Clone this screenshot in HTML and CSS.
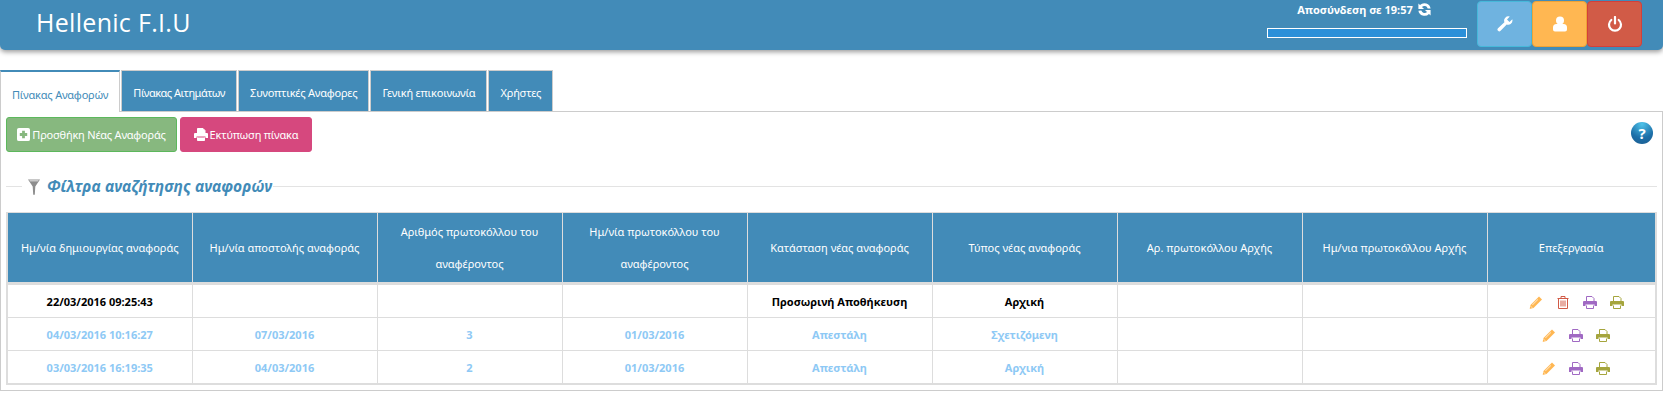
FILE: index.html
```html
<!DOCTYPE html>
<html lang="el">
<head>
  <meta charset="UTF-8" />
  <title>Hellenic F.I.U</title>
  <link rel="stylesheet" href="styles.css">
</head>
<body>

<svg class="defs" width="0" height="0">
  <symbol id="i-print" viewBox="0 0 14 13">
    <path d="M3.500 5.500V.5h5.500l2 2v3M3.500 9.500v3h7v-3" fill="#fff" stroke="currentColor"/>
    <path d="M1 5h12a1 1 0 0 1 1 1v4h-2.500V8.500h-9V10H0V6a1 1 0 0 1 1-1z" fill="currentColor"/>
  </symbol>
  <symbol id="i-pencil" viewBox="0 0 13 13">
    <path d="M9.500.5l3 3-8.500 8.500-4 1 1-4z" fill="currentColor"/>
    <path d="M8 3l.7.7-5.500 5.500-.7-.7zM1 9.500l2.500 2.500-.8.3-2-2z" fill="#fff" opacity="0.55"/>
  </symbol>
  <symbol id="i-trash" viewBox="0 0 12 13">
    <path d="M.5 2.500h11M4 2.500V.5h4v2M1.500 2.500v10h9v-10M4 4.500v6M6 4.500v6M8 4.500v6" fill="none" stroke="currentColor"/>
  </symbol>
</svg>

<header class="topbar">
  <div class="brand">Hellenic F.I.U</div>
  <div class="session">
    <div class="session-label">
      Αποσύνδεση σε 19:57
      <svg viewBox="0 0 16 16" width="15" height="15"><path d="M14.500 6.800A6.700 6.700 0 0 0 3.200 3.200L1.500 1.500v6H7.500L5.300 5.300a3.700 3.700 0 0 1 6.100 1.500zM1.500 9.200a6.700 6.700 0 0 0 11.300 3.600l1.700 1.700v-6H8.500l2.200 2.200a3.700 3.700 0 0 1-6.100-1.500z" fill="#fff"/></svg>
    </div>
    <div class="session-bar"></div>
  </div>
  <div class="top-buttons">
    <a class="top-btn btn-tools">
      <svg viewBox="0 0 16 16" width="16" height="16"><path d="M15.500 4.500a4.300 4.300 0 0 1-5.800 4L3.600 14.800a1.800 1.800 0 0 1-2.600-2.500l6.400-6.100A4.300 4.300 0 0 1 12.800.6L10 3.500l2.500 2.500 2.800-2.800z" fill="#fff"/></svg>
    </a>
    <a class="top-btn btn-user">
      <svg viewBox="0 0 14 16" width="14" height="16"><circle cx="7" cy="4.500" r="4" fill="#fff"/><path d="M0 13.500v-2A3.500 3.500 0 0 1 3.500 8h7a3.500 3.500 0 0 1 3.500 3.500v2a2 2 0 0 1-2 2H2a2 2 0 0 1-2-2z" fill="#fff"/></svg>
    </a>
    <a class="top-btn btn-power">
      <svg viewBox="0 0 16 16" width="16" height="16"><path d="M4.300 4a6 6 0 1 0 7.400 0" fill="none" stroke="#fff" stroke-width="2.200" stroke-linecap="round"/><path d="M8 1v6.500" stroke="#fff" stroke-width="2.200" stroke-linecap="round"/></svg>
    </a>
  </div>
</header>

<nav class="tabs">
  <a class="tab active">Πίνακας Αναφορών</a>
  <a class="tab requests">Πίνακας Αιτημάτων</a>
  <a class="tab">Συνοπτικές Αναφορες</a>
  <a class="tab">Γενική επικοινωνία</a>
  <a class="tab">Χρήστες</a>
</nav>

<main class="panel">
  <div class="actions">
    <a class="btn btn-add">
      <svg viewBox="0 0 14 14" width="13" height="13"><path d="M2 0h10a2 2 0 0 1 2 2v10a2 2 0 0 1-2 2H2a2 2 0 0 1-2-2V2a2 2 0 0 1 2-2zm3.500 3v2.500H3v3h2.500V11h3V8.500H11v-3H8.500V3z" fill="#fff" fill-rule="evenodd"/></svg>
      Προσθήκη Νέας Αναφοράς
    </a>
    <a class="btn btn-print">
      <svg class="print-white" width="14" height="13"><use href="#i-print"/></svg>
      Εκτύπωση πίνακα
    </a>
    <a class="help">?</a>
  </div>

  <div class="filter-title">
    <span class="filter-label">
      <svg viewBox="0 0 12 17" width="12" height="17"><path d="M0 1.500h12L7.300 8.500 6.800 16.500 6 17l-.8-.5-.5-8z" fill="#8d8d8d"/><path d="M.8 1h10.400l-1.200 2.500H2z" fill="#c8c8c8"/></svg>
      <em>Φίλτρα αναζήτησης αναφορών</em>
    </span>
  </div>

  <table class="reports">
    <thead>
      <tr>
        <th>Ημ/νία δημιουργίας αναφοράς</th>
        <th>Ημ/νία αποστολής αναφοράς</th>
        <th>Αριθμός πρωτοκόλλου του αναφέροντος</th>
        <th>Ημ/νία πρωτοκόλλου του αναφέροντος</th>
        <th>Κατάσταση νέας αναφοράς</th>
        <th>Τύπος νέας αναφοράς</th>
        <th>Αρ. πρωτοκόλλου Αρχής</th>
        <th>Ημ/νια πρωτοκόλλου Αρχής</th>
        <th class="edit-col">Επεξεργασία</th>
      </tr>
    </thead>
    <tbody>
      <tr class="draft">
        <td>22/03/2016 09:25:43</td>
        <td></td>
        <td></td>
        <td></td>
        <td>Προσωρινή Αποθήκευση</td>
        <td>Αρχική</td>
        <td></td>
        <td></td>
        <td class="edit">
          <svg class="ic orange" viewBox="0 0 13 13"><use href="#i-pencil"/></svg>
          <svg class="ic red" viewBox="0 0 12 13"><use href="#i-trash"/></svg>
          <svg class="ic purple"><use href="#i-print"/></svg>
          <svg class="ic olive"><use href="#i-print"/></svg>
        </td>
      </tr>
      <tr class="sent">
        <td>04/03/2016 10:16:27</td>
        <td>07/03/2016</td>
        <td>3</td>
        <td>01/03/2016</td>
        <td>Απεστάλη</td>
        <td>Σχετιζόμενη</td>
        <td></td>
        <td></td>
        <td class="edit">
          <svg class="ic orange" viewBox="0 0 13 13"><use href="#i-pencil"/></svg>
          <svg class="ic purple"><use href="#i-print"/></svg>
          <svg class="ic olive"><use href="#i-print"/></svg>
        </td>
      </tr>
      <tr class="sent">
        <td>03/03/2016 16:19:35</td>
        <td>04/03/2016</td>
        <td>2</td>
        <td>01/03/2016</td>
        <td>Απεστάλη</td>
        <td>Αρχική</td>
        <td></td>
        <td></td>
        <td class="edit">
          <svg class="ic orange" viewBox="0 0 13 13"><use href="#i-pencil"/></svg>
          <svg class="ic purple"><use href="#i-print"/></svg>
          <svg class="ic olive"><use href="#i-print"/></svg>
        </td>
      </tr>
    </tbody>
  </table>
</main>

</body>
</html>
```

FILE: styles.css
```css
html, body {
  overflow: hidden;
}

body {
  margin: 0;
  width: 1663px;
  font-family: "Noto Sans", "DejaVu Sans", sans-serif;
  font-size: 11px;
  background: #fff;
  color: #333;
}

.defs {
  position: absolute;
}

.topbar {
  display: flex;
  align-items: flex-start;
  height: 50px;
  background: #428bb8;
  border-radius: 0 0 5px 5px;
  box-shadow: 0 2px 5px rgba(0, 0, 0, 0.4);
}

.brand {
  flex: 1;
  padding: 5px 0 0 36px;
  font-family: "Open Sans", sans-serif;
  font-size: 25px;
  letter-spacing: 0.3px;
  line-height: 34px;
  color: #fff;
}

.session {
  width: 200px;
  margin-top: 1px;
  margin-right: 10px;
  color: #fff;
}

.session-label {
  display: flex;
  justify-content: center;
  align-items: center;
  gap: 4px;
  padding-right: 5px;
  height: 17px;
  font-size: 11px;
  font-weight: bold;
}

.session-bar {
  box-sizing: border-box;
  height: 10px;
  margin-top: 10px;
  border: 1px solid #fff;
  background: #2b90d9;
}

.top-buttons {
  display: flex;
  padding-top: 1px;
  margin-right: 21px;
}

.top-btn {
  display: flex;
  align-items: center;
  justify-content: center;
  box-sizing: border-box;
  width: 55px;
  height: 46px;
  border: 1px solid;
  border-radius: 4px;
}

.btn-tools { background: #6fb3e0; border-color: #46b8da; }
.btn-user { background: #ffb752; border-color: #eea236; }
.btn-power { background: #d15b47; border-color: #d43f3a; }

.tabs {
  display: flex;
  height: 41px;
  margin-top: 20px;
}

.tab {
  box-sizing: border-box;
  height: 41px;
  padding: 14px 11px 0;
  margin-right: 1px;
  border: 1px solid #ccc;
  border-bottom: 0;
  background: #428bb8;
  color: #fff;
  white-space: nowrap;
  letter-spacing: -0.2px;
}

.tab.requests {
  letter-spacing: -0.5px;
}

.tab.active {
  position: relative;
  z-index: 1;
  height: 42px;
  padding-top: 15px;
  border-top: 2px solid #428bb8;
  background: #fff;
  color: #428bb8;
}

.panel {
  box-sizing: border-box;
  height: 280px;
  padding: 5px 5px 0 5px;
  border: 1px solid #ccc;
}

.actions {
  display: flex;
  align-items: flex-start;
  gap: 3px;
  height: 35px;
}

.btn {
  display: flex;
  align-items: center;
  justify-content: center;
  gap: 2px;
  box-sizing: border-box;
  height: 35px;
  border: 1px solid;
  border-radius: 3px;
  color: #fff;
  white-space: nowrap;
  letter-spacing: -0.2px;
}

.btn-add {
  width: 171px;
  background: #87b87f;
  border-color: #5cb85c;
}

.btn-print {
  width: 132px;
  background: #d6487e;
  border-color: #d6487e;
}

.print-white {
  color: #fff;
}

.help {
  width: 22px;
  height: 22px;
  margin-left: auto;
  margin-top: 5px;
  margin-right: 4px;
  border-radius: 50%;
  background: radial-gradient(circle at 50% 10%, #4ec3ea, #1d6fa8 60%, #1b5c8f);
  color: #fff;
  font-size: 15px;
  font-weight: bold;
  line-height: 22px;
  text-align: center;
}

.filter-title {
  display: flex;
  align-items: center;
  height: 20px;
  margin-top: 24px;
  background: linear-gradient(#e3e3e3, #e3e3e3) 0 50% / 100% 1px no-repeat;
}

.filter-label {
  display: flex;
  align-items: center;
  gap: 7px;
  margin-left: 16px;
  padding: 0 1px 0 6px;
  background: #fff;
}

.filter-label em {
  color: #428bb8;
  font-size: 15.500px;
  font-weight: bold;
}

.reports {
  width: 1650px;
  margin-top: 16px;
  border-collapse: collapse;
  table-layout: fixed;
  border: 2px solid #ddd;
  border-top-width: 1px;
}

.reports th {
  box-sizing: border-box;
  width: 185px;
  height: 71px;
  padding: 0 8px;
  border: 1px solid #ddd;
  border-bottom-width: 3px;
  background: #428bb8;
  color: #fff;
  font-size: 11px;
  font-weight: normal;
  line-height: 32px;
  text-align: center;
}

.reports th.edit-col {
  width: 169px;
}

.reports td {
  height: 32px;
  padding: 0 4px;
  border: 1px solid #ddd;
  font-weight: bold;
  text-align: center;
}

.draft td {
  color: #000;
}

.sent td {
  color: #8ec9f5;
}

.reports td.edit {
  padding-left: 14px;
  white-space: nowrap;
}

.ic {
  width: 14px;
  height: 13px;
  margin: 0 5px;
  vertical-align: middle;
}

.orange { color: #ffb752; }
.red { color: #d15b47; }
.purple { color: #a069c3; }
.olive { color: #a5a53d; }
```
